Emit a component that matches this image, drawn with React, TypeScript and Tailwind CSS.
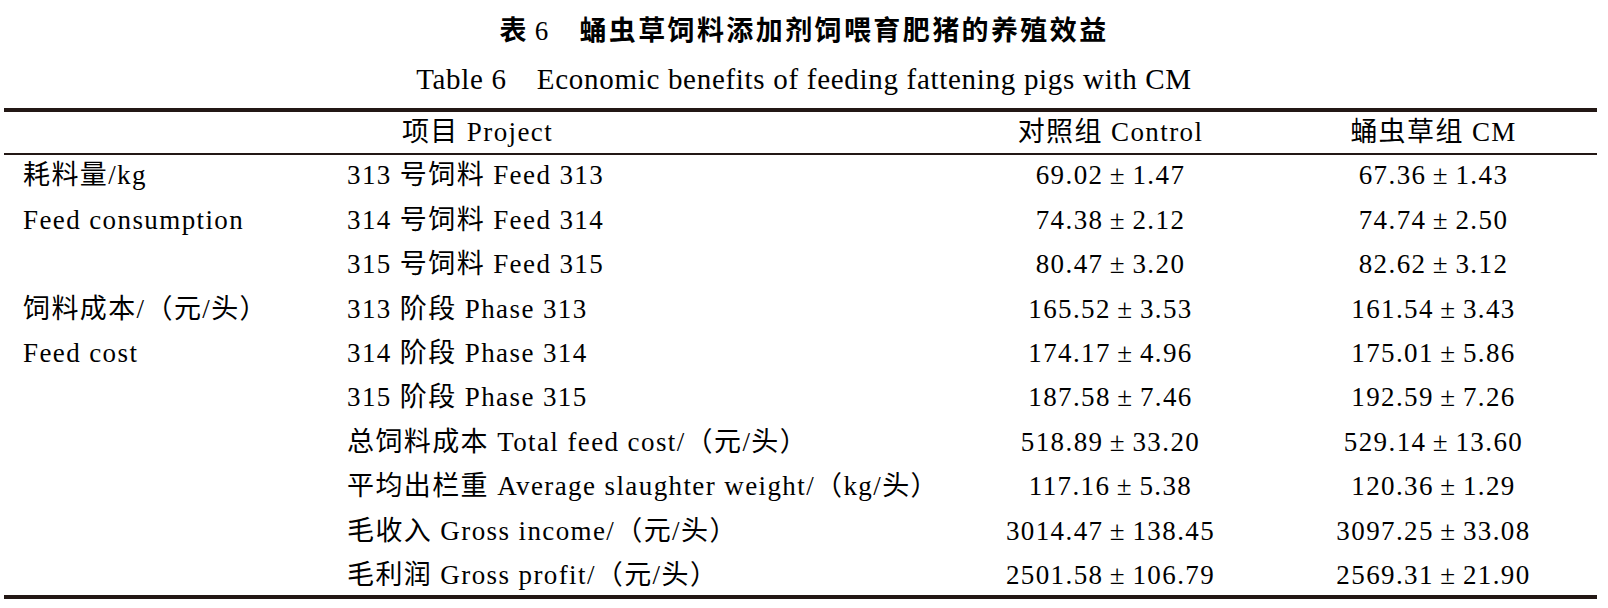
const rows = [
  ["耗料量/kg", "313 号饲料 Feed 313", "69.02±1.47", "67.36±1.43"],
  ["Feed consumption", "314 号饲料 Feed 314", "74.38±2.12", "74.74±2.50"],
  ["", "315 号饲料 Feed 315", "80.47±3.20", "82.62±3.12"],
  ["饲料成本/（元/头）", "313 阶段 Phase 313", "165.52±3.53", "161.54±3.43"],
  ["Feed cost", "314 阶段 Phase 314", "174.17±4.96", "175.01±5.86"],
  ["", "315 阶段 Phase 315", "187.58±7.46", "192.59±7.26"],
  ["", "总饲料成本 Total feed cost/（元/头）", "518.89±33.20", "529.14±13.60"],
  ["", "平均出栏重 Average slaughter weight/（kg/头）", "117.16±5.38", "120.36±1.29"],
  ["", "毛收入 Gross income/（元/头）", "3014.47±138.45", "3097.25±33.08"],
  ["", "毛利润 Gross profit/（元/头）", "2501.58±106.79", "2569.31±21.90"],
];

function Val({ text }: { text: string }) {
  const [mean, sd] = text.split("±");
  return (
    <span className="whitespace-nowrap">
      {mean}
      <span className="inline-block w-[29px] text-center">±</span>
      {sd}
    </span>
  );
}

export default function App() {
  return (
    <div
      className="w-[1608px] h-[608px] bg-white text-black overflow-hidden"
      style={{ fontFamily: '"Liberation Serif", "Noto Sans CJK SC", serif' }}
    >
      {/* caption */}
      <div className="pt-[13px] flex justify-center text-[27px] leading-[36px]">
        <span className="font-bold tracking-[2.4px]">表</span>
        <span className="ml-[6px]">6</span>
        <span className="ml-[31px] font-bold tracking-[2.4px]">
          蛹虫草饲料添加剂饲喂育肥猪的养殖效益
        </span>
      </div>
      <div className="mt-[12px] flex justify-center text-[29px] leading-[36px] tracking-[0.7px]">
        <span>Table 6</span>
        <span className="ml-[30px]">Economic benefits of feeding fattening pigs with CM</span>
      </div>

      {/* table */}
      <div className="mt-[11px] mx-[4px] w-[1593px] border-t-4 border-b-4 border-[#231815] text-[27px] tracking-[1.4px]">
        <div className="grid grid-cols-[947px_319px_327px] h-[43px] items-center pb-[3px] border-b-2 border-[#231815]">
          <div className="text-center">项目 Project</div>
          <div className="text-center">对照组 Control</div>
          <div className="text-center">蛹虫草组 CM</div>
        </div>
        {rows.map((r, i) => (
          <div
            key={i}
            className={
              i === rows.length - 1
                ? "grid grid-cols-[343px_604px_319px_327px] h-[40px] items-center whitespace-nowrap"
                : "grid grid-cols-[343px_604px_319px_327px] h-[44.4px] items-center pb-[3px] whitespace-nowrap"
            }
          >
            <div className="pl-[19px]">{r[0]}</div>
            <div>{r[1]}</div>
            <div className="text-center">
              <Val text={r[2]} />
            </div>
            <div className="text-center">
              <Val text={r[3]} />
            </div>
          </div>
        ))}
      </div>
    </div>
  );
}
